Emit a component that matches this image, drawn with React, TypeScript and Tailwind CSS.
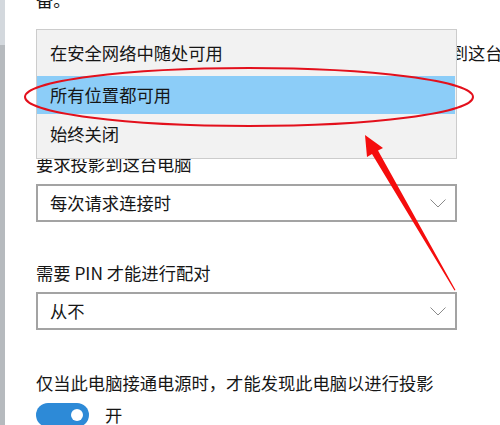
const font = { fontFamily: '"Microsoft YaHei", "Noto Sans CJK SC", "Noto Sans", sans-serif' }

const Combo = ({ value }: { value: string }) => (
  <div className="flex h-[38px] w-[421px] items-center justify-between border-2 border-[#a3a3a3] bg-white pl-[12px] pr-[9px]">
    <span>{value}</span>
    <svg width="16" height="9" viewBox="0 0 16 9" className="text-[#8a8a8a]">
      <polyline points="0.5,0.5 8,8 15.5,0.5" fill="none" stroke="currentColor" strokeWidth="1" />
    </svg>
  </div>
)

const options = ['在安全网络中随处可用', '所有位置都可用', '始终关闭']

export default function App() {
  return (
    <div
      className="relative flex h-[425px] w-[500px] overflow-hidden bg-white text-[17.3px] leading-[24px] text-[#161616]"
      style={font}
    >
      {/* scrollbar strip */}
      <div className="flex w-[5px] shrink-0 flex-col">
        <div className="h-[45px] bg-[#d3d8dd]" />
        <div className="flex-1 bg-[#b6babe]" />
      </div>

      <div className="flex flex-col pl-[31px]">
        <div className="-mt-[12px]">备。</div>

        <div className="mt-[29px] whitespace-nowrap">当你同意时，某些电脑和手机等可以在安全网络中投影到这台电脑</div>
        <div className="mt-[8px]">
          <Combo value="所有位置都可用" />
        </div>

        <div className="mt-[41px]">要求投影到这台电脑</div>
        <div className="mt-[8px]">
          <Combo value="每次请求连接时" />
        </div>

        <div className="mt-[39px]">需要 PIN 才能进行配对</div>
        <div className="mt-[7px]">
          <Combo value="从不" />
        </div>

        <div className="mt-[41px] whitespace-nowrap">仅当此电脑接通电源时，才能发现此电脑以进行投影</div>
        <div className="mt-[8px] flex items-center gap-[16px]">
          <div className="flex h-[24px] w-[53px] items-center justify-end rounded-full bg-[#2d8ad7] pr-[6px]">
            <div className="h-[12px] w-[12px] rounded-full bg-white" />
          </div>
          <span>开</span>
        </div>
      </div>

      {/* open dropdown list */}
      <div className="absolute left-[36px] top-[29px] flex h-[130px] w-[421px] flex-col border border-[#cccccc] bg-[#f2f2f2]">
        {options.map((opt, i) => (
          <div
            key={opt}
            className={
              i === 0
                ? 'flex h-[46px] items-center pl-[13px]'
                : i === 1
                ? 'mr-px flex h-[38px] items-center bg-[#8ccdf8] pl-[13px]'
                : 'flex h-[39px] items-center pl-[13px]'
            }
          >
            {opt}
          </div>
        ))}
      </div>

      {/* annotation */}
      <svg className="pointer-events-none absolute left-0 top-0" width="500" height="425" viewBox="0 0 500 425">
        <ellipse cx="249" cy="97" rx="224" ry="29" fill="none" stroke="#e3101c" strokeWidth="2" />
        <polygon
          points="365,135 383,148 378,150.5 455.5,290 454.5,290.5 372,154 367,157"
          fill="#f50d0d"
        />
      </svg>
    </div>
  )
}
